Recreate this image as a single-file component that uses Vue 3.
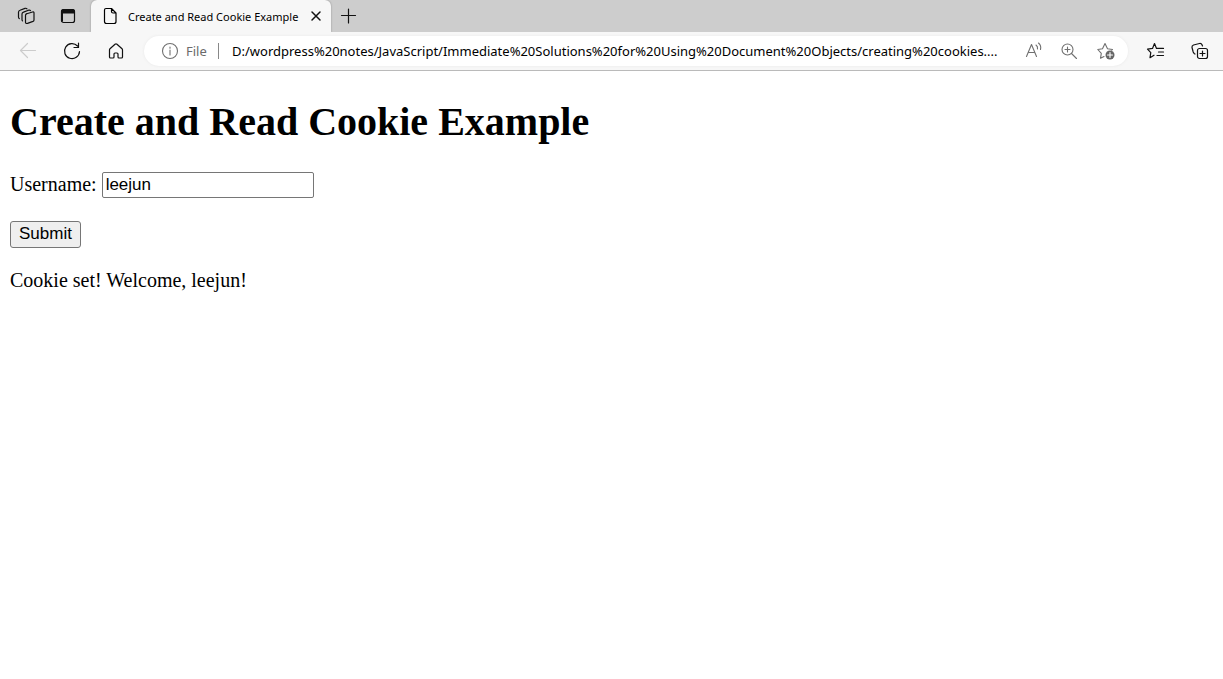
<script setup>
import { ref } from 'vue'

const title = 'Create and Read Cookie Example'
const address = ref(
  'D:/wordpress%20notes/JavaScript/Immediate%20Solutions%20for%20Using%20Document%20Objects/creating%20cookies....'
)
const username = ref('leejun')
const message = ref('Cookie set! Welcome, leejun!')

function submit() {
  message.value = `Cookie set! Welcome, ${username.value}!`
}
</script>

<template>
  <div class="browser">
    <header class="chrome">
      <div class="tabs">
        <button class="icon-button" aria-label="Workspaces">
          <svg class="icon" viewBox="-1 0 20 20">
            <path d="M9 8L15.500 6Q17 5.600 17 7v7q0 1-1 1.400l-5.500 2Q8.500 17.800 8.500 16.300V9.500Q8.500 8.300 9.500 7.900" />
            <path d="M5.500 14.800Q5 14.300 5 13.500V8Q5 6.600 6.500 6.100L11.500 4.200Q12.900 3.800 13.500 4.600" />
            <path d="M2.300 12.600Q1.500 12 1.500 11V6.200Q1.500 4.700 3 4.200L8 2.400Q9.300 2 10 2.800" />
          </svg>
        </button>
        <button class="icon-button" aria-label="Tab actions">
          <svg class="icon" viewBox="0 0 20 20">
            <rect x="3.500" y="3.500" width="13" height="13" rx="2" />
            <path class="solid" d="M3 5.500Q3 3 5.500 3h9Q17 3 17 5.500V7.500H5v8H3z" />
          </svg>
        </button>
        <div class="tab">
          <svg class="icon" viewBox="0 0 20 20">
            <path d="M4.500 4Q4.500 2.500 6 2.500h5.500l4.500 4.500v8.500q0 2-2 2h-7.500q-2 0-2-2z M11.500 2.500v3q0 1.500 1.500 1.500h3" />
          </svg>
          <span class="tab-title">{{ title }}</span>
          <button class="close" aria-label="Close tab">
            <svg class="icon-small" viewBox="0 0 12 12"><path class="bold" d="M2 2l8 8M10 2l-8 8" /></svg>
          </button>
        </div>
        <button class="new-tab" aria-label="New tab">
          <svg class="icon" viewBox="0 0 20 20"><path d="M10.500 3v14M3.500 9.500h14" /></svg>
        </button>
      </div>

      <div class="toolbar">
        <nav class="navigation">
          <button class="icon-button disabled" aria-label="Back" disabled>
            <svg class="icon" viewBox="0 0 20 20"><path d="M17.500 9.500H2.500M9.500 2.500l-7 7 7 7" /></svg>
          </button>
          <button class="icon-button" aria-label="Refresh">
            <svg class="icon" viewBox="0 0 20 20">
              <path d="M15.500 5A7.500 7.500 0 1 0 17.500 10.500M16.500 2v4.500h-4.500" />
            </svg>
          </button>
          <button class="icon-button" aria-label="Home">
            <svg class="icon" viewBox="0 0 20 20">
              <path d="M3.500 9Q3.500 8.200 4 7.700L9 3.200q1-.8 2 0l5 4.500q.5.500.5 1.300v7q0 1-1 1h-2.500q-1 0-1-1v-3q0-1-1-1h-2q-1 0-1 1v3q0 1-1 1H4.500q-1 0-1-1z" />
            </svg>
          </button>
        </nav>
        <div class="address-bar">
          <svg class="icon grey" viewBox="0 0 20 20">
            <circle cx="10" cy="10" r="7.500" /><path d="M10 9v5M10 6v1.300" />
          </svg>
          <span class="scheme">File</span>
          <input v-model="address" class="address" aria-label="Address" spellcheck="false" />
          <div class="address-actions">
            <button class="action" aria-label="Read aloud">
              <svg class="icon grey" viewBox="0 0 20 20">
                <path d="M2.500 15.500L7.500 3.500l5 12M4.500 11.500h6M12 4q2 1.500 1.500 4M14.500 2q3 2.500 2 6.500" />
              </svg>
            </button>
            <button class="action" aria-label="Zoom">
              <svg class="icon grey" viewBox="0 0 20 20">
                <circle cx="7.500" cy="8.500" r="5.500" /><path d="M11.500 12.500l5 5M5 8.500h5M7.500 6v5" />
              </svg>
            </button>
            <button class="action" aria-label="Add to favorites">
              <svg class="icon grey" viewBox="0 0 20 20">
                <path d="M8 15.500l-3.500 1.800.8-5L1.800 8.500l4.700-.8L9 2.500l2.500 5.200 5 .8-.8.700" />
                <circle class="disc" cx="14" cy="14" r="4.500" />
                <path class="plus" d="M14 11.500v5M11.500 14h5" />
              </svg>
            </button>
          </div>
        </div>
        <nav class="extras">
          <button class="icon-button" aria-label="Favorites">
            <svg class="icon" viewBox="0 0 20 20">
              <path d="M8 14.200l-4 2.500.8-5L1.500 8.200l5-.8L8.500 2.500l2 4.900h7M12.500 11h5M11 14.500h6.500" />
            </svg>
          </button>
          <button class="icon-button" aria-label="Collections">
            <svg class="icon" viewBox="0 0 20 20">
              <rect x="7.500" y="7.500" width="10" height="10" rx="2" />
              <path d="M12.500 10v5M10 12.500h5M5 13l-.5-.3Q3.500 12 3.200 11L2 6.500Q1.700 4.700 3.500 4L9.500 2.500q1.800-.3 2.500 1.200l.5 1.300" />
            </svg>
          </button>
        </nav>
      </div>
    </header>

    <main class="page">
      <h1>{{ title }}</h1>
      <form @submit.prevent="submit">
        <div class="field">
          <label for="username">Username:</label>
          <input id="username" v-model="username" type="text" />
        </div>
        <button class="submit" type="submit">Submit</button>
      </form>
      <p>{{ message }}</p>
    </main>
  </div>
</template>

<style>
body {
  background: #fff;
}
</style>

<style scoped>
.browser {
  color: #000;
}
.chrome {
  background: #f7f7f7;
  border-bottom: 1px solid #bababa;
  font-family: "Noto Sans", "Open Sans", sans-serif;
}
.chrome button {
  display: flex;
  align-items: center;
  justify-content: center;
  flex: none;
  padding: 0;
  border: 0;
  background: none;
  color: #111;
}
.icon {
  width: 20px;
  height: 20px;
  flex: none;
}
.icon-small {
  width: 12px;
  height: 12px;
}
svg {
  fill: none;
  stroke: currentColor;
  stroke-width: 1.2;
  stroke-linecap: round;
  stroke-linejoin: round;
}
.solid {
  fill: currentColor;
  stroke: none;
}
.bold {
  stroke-width: 1.5;
}
.tabs {
  display: flex;
  align-items: center;
  height: 32px;
  padding-left: 5px;
  background: #cdcdcd;
}
.chrome .icon-button {
  width: 44px;
  height: 32px;
}
.tabs .icon-button {
  width: 42px;
}
.tab {
  display: flex;
  align-items: center;
  gap: 8px;
  width: 240px;
  height: 32px;
  margin-left: 2px;
  padding: 0 9px;
  box-sizing: border-box;
  border-radius: 6px 6px 0 0;
  background: #f7f7f7;
  box-shadow: 0 0 2px #888;
  clip-path: inset(0 -3px);
}
.tab-title {
  flex: 1;
  min-width: 0;
  font-size: 11px;
  white-space: nowrap;
}
.chrome .close {
  width: 12px;
  height: 20px;
}
.chrome .new-tab {
  width: 34px;
  height: 32px;
}
.toolbar {
  display: flex;
  align-items: center;
  height: 38px;
  padding: 0 1px 0 6px;
}
.navigation,
.extras {
  display: flex;
}
.chrome .disabled {
  color: #ccc;
}
.address-bar {
  display: flex;
  align-items: center;
  flex: 1;
  min-width: 0;
  height: 30px;
  margin-left: 6px;
  padding: 0 12px 0 16px;
  box-sizing: border-box;
  border-radius: 15px;
  background: #fff;
  box-shadow: 0 0 3px #e8e8e8;
}
.address-bar .grey {
  color: #707070;
  stroke-width: 1.1;
}
.address-bar .disc {
  fill: #666;
  stroke: none;
}
.address-bar .plus {
  stroke: #fff;
}
.scheme {
  width: 26px;
  margin-left: 6px;
  padding-right: 6px;
  border-right: 1px solid #888;
  color: #6b6b6b;
  font-size: 13px;
  line-height: 16px;
}
.address {
  flex: 1;
  min-width: 0;
  margin-left: 13px;
  padding: 0;
  border: 0;
  outline: 0;
  background: none;
  color: #000;
  font: 13px/20px "Noto Sans", "Open Sans", sans-serif;
}
.address-actions {
  display: flex;
  gap: 16px;
  margin-left: 14px;
}
.extras {
  margin-left: 6px;
}
.page {
  padding: 27px 10px;
  font-family: "Liberation Serif", serif;
  font-size: 20px;
  line-height: 24px;
}
h1 {
  margin: 0;
  font-size: 40px;
  line-height: 48px;
}
.field {
  display: flex;
  align-items: flex-start;
  gap: 5px;
  margin-top: 26px;
}
#username {
  width: 212px;
  height: 26px;
  box-sizing: border-box;
  padding: 1px 3px;
  border: 1px solid #767676;
  border-radius: 2px;
  background: #fff;
  color: #000;
  font: 17px "Liberation Sans", Arial, sans-serif;
}
.submit {
  height: 27px;
  margin-top: 23px;
  padding: 0 8px 2px;
  border: 1px solid #767676;
  border-radius: 3px;
  background: #efefef;
  color: #000;
  font: 17px "Liberation Sans", Arial, sans-serif;
}
p {
  margin: 20px 0 0;
}
</style>
